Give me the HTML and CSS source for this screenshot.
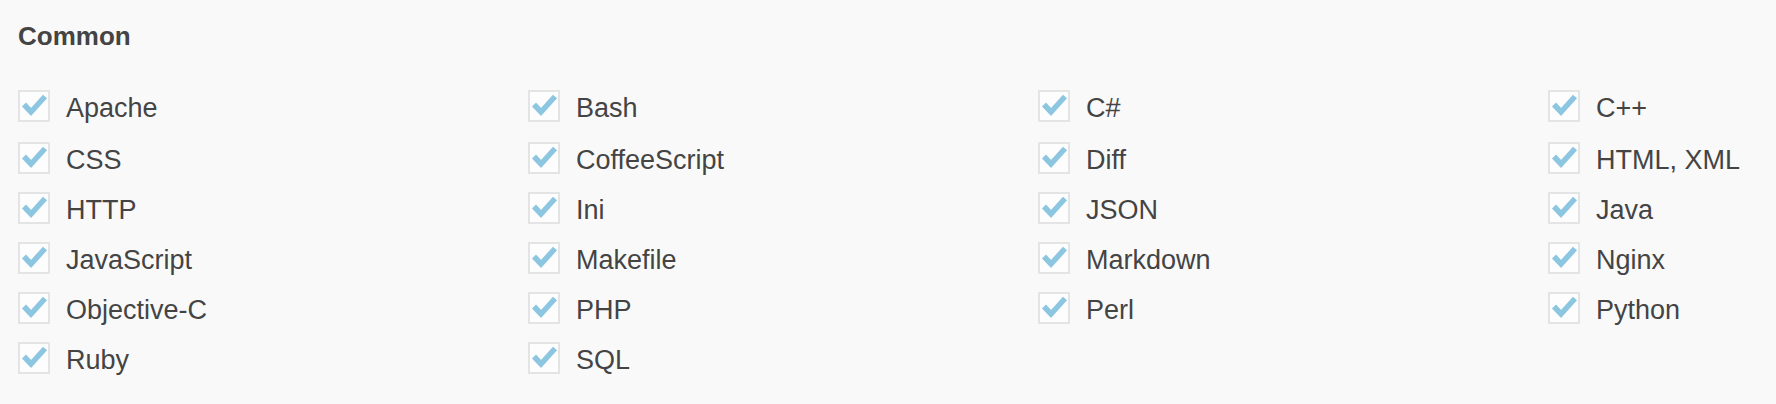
FILE: index.html
```html
<!DOCTYPE html>
<html lang="en">
<head>
  <meta charset="UTF-8" />
  <title>Languages</title>
  <link rel="stylesheet" href="styles.css">
</head>
<body>

  <!-- Grupo de lenguajes comunes -->
  <section class="grupo">
    <h2>Common</h2>

    <ul class="lista">
      <li><span class="caja"><svg viewBox="0 0 32 32"><polyline points="6,14.5 13,22 27,6.5"/></svg></span><span class="nombre">Apache</span></li>
      <li><span class="caja"><svg viewBox="0 0 32 32"><polyline points="6,14.5 13,22 27,6.5"/></svg></span><span class="nombre">Bash</span></li>
      <li><span class="caja"><svg viewBox="0 0 32 32"><polyline points="6,14.5 13,22 27,6.5"/></svg></span><span class="nombre">C#</span></li>
      <li><span class="caja"><svg viewBox="0 0 32 32"><polyline points="6,14.5 13,22 27,6.5"/></svg></span><span class="nombre">C++</span></li>

      <li><span class="caja"><svg viewBox="0 0 32 32"><polyline points="6,14.5 13,22 27,6.5"/></svg></span><span class="nombre">CSS</span></li>
      <li><span class="caja"><svg viewBox="0 0 32 32"><polyline points="6,14.5 13,22 27,6.5"/></svg></span><span class="nombre">CoffeeScript</span></li>
      <li><span class="caja"><svg viewBox="0 0 32 32"><polyline points="6,14.5 13,22 27,6.5"/></svg></span><span class="nombre">Diff</span></li>
      <li><span class="caja"><svg viewBox="0 0 32 32"><polyline points="6,14.5 13,22 27,6.5"/></svg></span><span class="nombre">HTML, XML</span></li>

      <li><span class="caja"><svg viewBox="0 0 32 32"><polyline points="6,14.5 13,22 27,6.5"/></svg></span><span class="nombre">HTTP</span></li>
      <li><span class="caja"><svg viewBox="0 0 32 32"><polyline points="6,14.5 13,22 27,6.5"/></svg></span><span class="nombre">Ini</span></li>
      <li><span class="caja"><svg viewBox="0 0 32 32"><polyline points="6,14.5 13,22 27,6.5"/></svg></span><span class="nombre">JSON</span></li>
      <li><span class="caja"><svg viewBox="0 0 32 32"><polyline points="6,14.5 13,22 27,6.5"/></svg></span><span class="nombre">Java</span></li>

      <li><span class="caja"><svg viewBox="0 0 32 32"><polyline points="6,14.5 13,22 27,6.5"/></svg></span><span class="nombre">JavaScript</span></li>
      <li><span class="caja"><svg viewBox="0 0 32 32"><polyline points="6,14.5 13,22 27,6.5"/></svg></span><span class="nombre">Makefile</span></li>
      <li><span class="caja"><svg viewBox="0 0 32 32"><polyline points="6,14.5 13,22 27,6.5"/></svg></span><span class="nombre">Markdown</span></li>
      <li><span class="caja"><svg viewBox="0 0 32 32"><polyline points="6,14.5 13,22 27,6.5"/></svg></span><span class="nombre">Nginx</span></li>

      <li><span class="caja"><svg viewBox="0 0 32 32"><polyline points="6,14.5 13,22 27,6.5"/></svg></span><span class="nombre">Objective-C</span></li>
      <li><span class="caja"><svg viewBox="0 0 32 32"><polyline points="6,14.5 13,22 27,6.5"/></svg></span><span class="nombre">PHP</span></li>
      <li><span class="caja"><svg viewBox="0 0 32 32"><polyline points="6,14.5 13,22 27,6.5"/></svg></span><span class="nombre">Perl</span></li>
      <li><span class="caja"><svg viewBox="0 0 32 32"><polyline points="6,14.5 13,22 27,6.5"/></svg></span><span class="nombre">Python</span></li>

      <li><span class="caja"><svg viewBox="0 0 32 32"><polyline points="6,14.5 13,22 27,6.5"/></svg></span><span class="nombre">Ruby</span></li>
      <li><span class="caja"><svg viewBox="0 0 32 32"><polyline points="6,14.5 13,22 27,6.5"/></svg></span><span class="nombre">SQL</span></li>
    </ul>
  </section>

</body>
</html>
```

FILE: styles.css
```css
:root {
  --fondo: #f9f9f9;
  --texto: #444444;
  --borde: #e4e4e4;
  --check: #8cc6e0;
}
* { box-sizing: border-box; }
body {
  margin: 0;
  font-family: 'Liberation Sans', Arial, sans-serif;
  background: var(--fondo);
  color: var(--texto);
}
.grupo {
  padding: 0 0 0 18px;
}
h2 {
  font-size: 26px;
  line-height: 32px;
  font-weight: bold;
  margin: 20px 0 38px;
}
.lista {
  list-style: none;
  margin: 0;
  padding: 0;
  display: grid;
  grid-template-columns: repeat(3, 510px) auto;
  grid-auto-rows: 50px;
}
.lista li {
  display: flex;
  align-items: flex-start;
  gap: 16px;
  font-size: 27px;
  line-height: 32px;
}
.lista li:nth-child(n+5) {
  margin-top: 2px;
}
.nombre {
  padding-top: 2px;
}
.caja {
  flex: none;
  width: 32px;
  height: 32px;
  border: 2px solid var(--borde);
  background: #fdfdfd;
  position: relative;
}
.caja svg {
  position: absolute;
  left: -2px;
  top: -2px;
  width: 32px;
  height: 32px;
  fill: none;
  stroke: var(--check);
  stroke-width: 5.5;
}
```
